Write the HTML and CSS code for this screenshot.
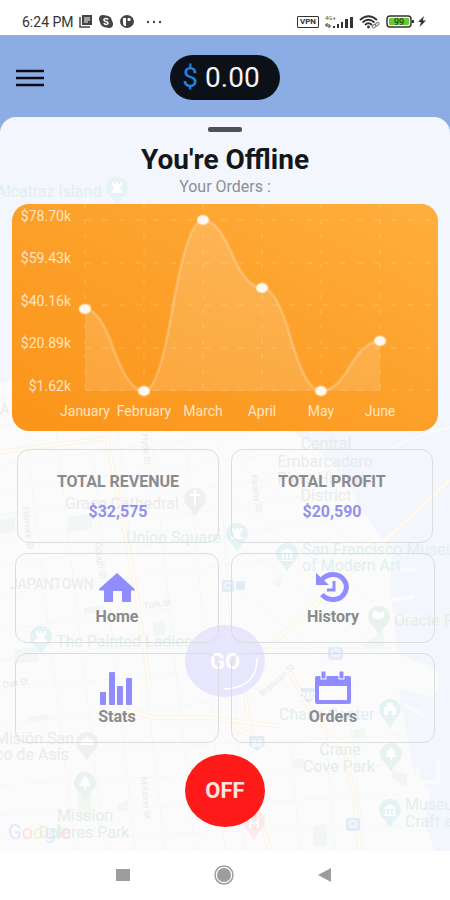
FILE: index.html
```html
<!DOCTYPE html>
<html lang="en">
<head>
<meta charset="utf-8">
<meta name="viewport" content="width=device-width, initial-scale=1">
<title>Driver dashboard</title>
<link rel="stylesheet" href="styles.css">
</head>
<body>
<div class="status-bar">
  <div class="status-group">
    <span class="clock">6:24 PM</span>
    <svg class="status-news" width="13" height="13" viewBox="0 0 13 13" aria-hidden="true"><path d="M3 0h10v10H3z" fill="#454545"/><path d="M1 2v10h10" fill="none" stroke="#454545" stroke-width="1.500"/><path d="M5 3h6M5 5h6M5 7h4" stroke="#fff"/></svg>
    <svg class="status-skype" width="14" height="13" viewBox="0 0 14 13" aria-hidden="true"><circle cx="4" cy="4" r="4" fill="#454545"/><circle cx="10" cy="9" r="4" fill="#454545"/><circle cx="7" cy="6.5" r="6" fill="#454545"/><path d="M9.2 4.4C8 3 4.900 3.200 4.900 4.900c0 2 4.300 1 4.300 3.100 0 1.700-3.300 1.900-4.500.3" fill="none" stroke="#fff" stroke-width="1.500"/></svg>
    <svg class="status-app" width="14" height="13" viewBox="0 0 14 13" aria-hidden="true"><ellipse cx="7" cy="6.500" rx="7" ry="6.500" fill="#454545"/><path d="M3 3h3v8H4.500Q3 10 3 8z" fill="#fff"/><rect x="7.500" y="3" width="3" height="3" rx="1" fill="#fff"/></svg>
    <svg width="16" height="4" viewBox="0 0 16 4" aria-hidden="true"><g fill="#454545"><circle cx="2" cy="2" r="1.200"/><circle cx="8" cy="2" r="1.200"/><circle cx="14" cy="2" r="1.200"/></g></svg>
  </div>
  <div class="status-group status-right">
    <span class="vpn">VPN</span>
    <svg width="28" height="14" viewBox="0 0 28 14" aria-hidden="true"><text x="0" y="5" class="network">4G+</text><g fill="#333"><rect x="8" y="11" width="2" height="2"/><rect x="12" y="9" width="2" height="4"/><rect x="16" y="7" width="2" height="6"/><rect x="20" y="4" width="3" height="9"/><rect x="25" y="2" width="3" height="11"/></g><path d="M2 8v4M4 9v4M0 10h2M4 11h2" stroke="#333"/></svg>
    <svg width="21" height="14" viewBox="0 0 21 14" aria-hidden="true"><g fill="none" stroke="#333" stroke-width="1.800"><path d="M1 5Q9.500-2.500 18 5M3.500 7.500Q9.500 2 15.500 7.500M6 10Q9.500 6.500 13 10"/></g><circle cx="9.500" cy="12" r="1.400" fill="#333"/><g fill="none" stroke="#777"><rect x="13" y="10" width="4" height="2.500" rx="1.200" transform="rotate(-40 15 11)"/><rect x="16" y="8" width="4" height="2.500" rx="1.200" transform="rotate(-40 18 9)"/></g></svg>
    <svg width="29" height="13" viewBox="0 0 29 13" aria-hidden="true"><rect x="1" y="1" width="24" height="11" rx="3" fill="#fff" stroke="#333" stroke-width="1.500"/><rect x="3" y="3" width="20" height="7" rx="1" fill="#66cc2e"/><rect x="26" y="5" width="2" height="3" fill="#333"/><text x="13" y="10" class="battery-level">99</text></svg>
    <svg class="bolt" width="8" height="11" viewBox="0 0 8 11" aria-hidden="true"><path d="M6 0 0 6h3L1.500 11 8 4.500H4.800z" fill="#333"/></svg>
  </div>
</div>

<div class="app">
  <header class="app-header">
    <button class="menu-button" type="button" aria-label="Menu">
      <svg width="28" height="18" viewBox="0 0 28 18"><path d="M0 2h28M0 9h28M0 16h28" stroke="#0b0d12" stroke-width="2.600"/></svg>
    </button>
    <div class="balance"><span class="currency">$</span> 0.00</div>
  </header>

  <main class="sheet">
    <svg class="map" viewBox="0 117 450 734" preserveAspectRatio="xMidYMid slice" aria-hidden="true">
      <path d="M0 383Q70 365 140 372Q230 380 290 430Q345 465 358 505Q380 535 392 555L390 590L396 640L400 700L408 740Q412 780 430 790L425 825L435 851H0Z" fill="#fbfbfb"/>
      <g stroke="#f6f7f8" fill="none">
        <path d="M0 400 220 375M0 425 260 400M0 465 260 430M0 490 330 447M0 515 340 470M0 540 350 490M0 565 370 515M0 595 380 545M0 630 180 607M0 660 180 640M0 690 180 672M0 725 230 700M0 755 400 735M0 785 400 765M0 815 400 795M0 840 400 825"/>
        <path d="M20 385 75 851M50 380 105 851M85 378 135 851M112 375 165 851M145 375 195 851M180 380 225 851M215 390 245 851M290 740 300 851M325 720 335 851M350 720 365 851M395 570 230 460M385 610 225 495M385 650 230 540M365 690 240 590"/>
      </g>
      <path d="M510 415Q420 430 389 450" stroke="#fbfbfb" stroke-width="2" fill="none"/>
      <path d="M390 600l24-3M388 615l30 4M396 570h21M405 705l20 12M418 767v14" stroke="#fbfbfb" stroke-width="4" fill="none"/>
      <path d="M398 655l35 22v18l-33-8zM438 760v22h-22" stroke="#fbfbfb" stroke-width="4" fill="none"/>
      <path d="M396 653l42 18v22l-40-6z" fill="#fbfbfb"/>
      <g fill="none" stroke="#fcf6ea" stroke-width="5">
        <path d="M0 452 107 438 135 585 150 686M450 480 375 550 260 655M125 710 155 718 210 718 280 726M290 672 310 710 345 752 355 800 360 851M245 690 250 735 230 725M250 785 270 851"/>
      </g>
      <g fill="none" stroke="#fefcf7" stroke-width="2">
        <path d="M0 452 107 438 135 585 150 686M450 480 375 550 260 655M125 710 155 718 210 718 280 726M290 672 310 710 345 752 355 800 360 851M245 690 250 735 230 725M250 785 270 851"/>
      </g>
      <g fill="#f3f7f4">
        <path d="M68 517l24-4v16l-24 3zM0 520l15-3v14l-15 3zM84 608l20-3v7l-20 3zM153 622l12-1v14l-12 2zM14 650l24-4v15l-24 3zM28 717l20-3v5l-20 3zM78 778h13v40H78zM118 804l10-4v10l-10 2zM293 760l11-2v10h-11zM313 826l14-2v22h-14zM362 645l22-15v16l-15 5zM392 770l15 4v13l-15-8zM353 730l12-2v10h-12zM272 582l8-6 3 8-6 4z"/>
      </g>

      <ellipse cx="225" cy="661" rx="40" ry="36" fill="#e7e6fd"/>
      <path d="M257 658q0 30-33 31" fill="none" stroke="#fff" stroke-width="1.500"/>
      <path d="M192 663q0-30 33-31 25 0 31 18" fill="none" stroke="#ecebfd"/>
      <text x="225" y="669" class="go">GO</text>

      <g fill="#e6f3f4">
        <path d="M117 205q-5-8-9-11a11 11 0 1 1 18 0q-4 3-9 11zM237 552q-5-9-9-12a11 11 0 1 1 18 0q-4 3-9 12zM287 572q-5-9-9-12a11 11 0 1 1 18 0q-4 3-9 12zM41 655q-5-9-9-12a11 11 0 1 1 18 0q-4 3-9 12zM390 728q-5-9-9-12a11 11 0 1 1 18 0q-4 3-9 12zM390 828q-5-9-9-12a11 11 0 1 1 18 0q-4 3-9 12z"/>
      </g>
      <g fill="#e9f3ed">
        <path d="M379 635q-5-9-9-12a11 11 0 1 1 18 0q-4 3-9 12zM85 801q-5-9-9-12a11 11 0 1 1 18 0q-4 3-9 12zM391 772q-5-9-9-12a11 11 0 1 1 18 0q-4 3-9 12z"/>
      </g>
      <g fill="#eff0f2">
        <path d="M195 517q-5-9-9-12a11 11 0 1 1 18 0q-4 3-9 12zM87 761q-5-9-9-12a11 11 0 1 1 18 0q-4 3-9 12z"/>
      </g>
      <path d="M254 840q-5-9-9-12a11 11 0 1 1 18 0q-4 3-9 12z" fill="#fce9ea"/>
      <g fill="#fff">
        <path id="rook" d="M112 182h2v2h2v-2h2v2h2v-2h2v4l-2 1 1 4h2v2h-12v-2h2l1-4-2-1z"/>
        <use href="#rook" x="120" y="346"/><use href="#rook" x="-76" y="449"/>
        <path d="M281 552l6-4 6 4v1h-12zM282 554h2v5h-2zM286 554h2v5h-2zM290 554h2v5h-2zM281 560h12v1h-12z"/>
        <path d="M384 808l6-4 6 4v1h-12zM385 810h2v5h-2zM389 810h2v5h-2zM393 810h2v5h-2zM384 815h12v1h-12z"/>
        <path d="M384 707h3v-4h6v4h3v8h-4v-4h-4v4h-4zM194 490h2v4h4v2h-4v9h-2v-9h-4v-2h4zM81 745v-4l2-2 2 2v-2l2-3 2 3v2l2-2 2 2v4z"/>
        <path id="tree" d="M85 776l5 6h-2l3 4h-5v3h-2v-3h-5l3-4h-2z"/>
        <use href="#tree" x="306" y="-29"/>
        <path d="M373 612q2-3 4 0 2 2 7-1v6q-6 4-12 0zM249 818h2v4h6v-4h2v10h-2v-4h-6v4h-2z"/>
      </g>
      <g fill="#e3ebf9">
        <rect x="328" y="647" width="15" height="13" rx="2"/><rect x="346" y="818" width="14" height="13" rx="2"/><rect x="222" y="580" width="12" height="12" rx="2"/><rect x="236" y="581" width="9" height="9" rx="2"/><path d="M301 688h15l1 9-9 6-7-6zM249 736h15l1 9-8 6-8-6z"/>
      </g>
      <g fill="none" stroke="#fff"><rect x="332" y="650" width="7" height="6" rx="1"/><rect x="350" y="821" width="6" height="6" rx="1"/><rect x="225" y="583" width="6" height="5" rx="1"/></g>

      <g class="place gray">
        <text x="65" y="509">Grace Cathedral</text><text x="10" y="589" class="district">JAPANTOWN</text>
        <text x="326" y="449" class="mid">Central</text><text x="325" y="467" class="mid">Embarcadero</text><text x="325" y="484" class="mid">Piers Historic</text><text x="326" y="501" class="mid">District</text>
        <text x="-5" y="744">Misión San</text><text x="-5" y="760">co de Asís</text><text x="0" y="414" class="district">A D</text>
      </g>
      <g class="place teal">
        <text x="-4" y="197">Alcatraz Island</text><text x="126" y="543">Union Square</text><text x="56" y="647">The Painted Ladies</text>
        <text x="302" y="555">San Francisco Museum</text><text x="302" y="571">of Modern Art</text><text x="279" y="720">Chase Center</text><text x="405" y="810">Museum of</text><text x="405" y="827">Craft and Design</text>
      </g>
      <g class="place green">
        <text x="394" y="626">Oracle Park</text><text x="340" y="755" class="mid">Crane</text><text x="339" y="772" class="mid">Cove Park</text><text x="85" y="821" class="mid">Mission</text><text x="84" y="838" class="mid">Dolores Park</text>
      </g>
      <g class="street">
        <text transform="translate(142 434) rotate(85)">Hyde St</text><text transform="translate(22 507) rotate(82)">Fillmore St</text><text transform="translate(95 543) rotate(82)">Gough St</text><text transform="translate(251 475) rotate(82)">Kearny St</text>
        <text transform="translate(144 609) rotate(-8)">Turk St</text><text transform="translate(3 688) rotate(-8)">Oak St</text><text transform="translate(263 697) rotate(-42)">Brannan St</text><text transform="translate(141 777) rotate(85)">Mission St</text>
      </g>
      <text x="308" y="699" class="road">280</text><text x="257" y="747" class="road">80</text>
      <text x="8" y="839" class="google"><tspan fill="#dfe8fc">G</tspan><tspan fill="#fbe0de">o</tspan><tspan fill="#fdf1d3">o</tspan><tspan fill="#dfe8fc">g</tspan><tspan fill="#e0f2e4">l</tspan><tspan fill="#fbe0de">e</tspan></text>
    </svg>

    <div class="content">
      <div class="handle"></div>
      <h1 class="title">You're Offline</h1>
      <p class="subtitle">Your Orders :</p>

      <svg class="chart" viewBox="0 0 426 227" role="img" aria-label="Orders from January to June">
        <defs>
          <linearGradient id="card-fill" x1="0" y1="1" x2="1" y2="0"><stop offset="0" stop-color="#fb941a"/><stop offset=".5" stop-color="#fca029"/><stop offset="1" stop-color="#ffaf3d"/></linearGradient>
          <linearGradient id="area-fill" x1="0" y1="0" x2="0" y2="1"><stop offset="0" stop-color="#fff" stop-opacity=".17"/><stop offset="1" stop-color="#fff" stop-opacity=".13"/></linearGradient>
        </defs>
        <rect width="426" height="227" rx="17" fill="url(#card-fill)"/>
        <path d="M73 16h353M73 59h353M73 101h353M73 144h353M73 186h353" class="grid-h"/>
        <path d="M73 0v187M132 0v187M191 0v187M250 0v187M309 0v187M368 0v187" class="grid-v"/>
        <path d="M73 105Q88 105 102 146Q117 187 132 187Q147 187 161 101Q176 16 191 16Q206 16 220 50Q235 84 250 84Q265 84 279 135Q294 187 309 187Q324 187 338 162Q353 137 368 137V187H73Z" fill="url(#area-fill)"/>
        <path d="M73 105Q88 105 102 146Q117 187 132 187Q147 187 161 101Q176 16 191 16Q206 16 220 50Q235 84 250 84Q265 84 279 135Q294 187 309 187Q324 187 338 162Q353 137 368 137" class="line"/>
        <g class="dots"><ellipse cx="73" cy="105" rx="6" ry="5"/><ellipse cx="132" cy="187" rx="6" ry="5"/><ellipse cx="191" cy="16" rx="6" ry="5"/><ellipse cx="250" cy="84" rx="6" ry="5"/><ellipse cx="309" cy="187" rx="6" ry="5"/><ellipse cx="368" cy="137" rx="6" ry="5"/></g>
        <g class="axis-y"><text x="59" y="17">$78.70k</text><text x="59" y="59">$59.43k</text><text x="59" y="102">$40.16k</text><text x="59" y="144">$20.89k</text><text x="59" y="187">$1.62k</text></g>
        <g class="axis-x"><text x="73" y="212">January</text><text x="132" y="212">February</text><text x="191" y="212">March</text><text x="250" y="212">April</text><text x="309" y="212">May</text><text x="368" y="212">June</text></g>
      </svg>

      <section class="totals">
        <div class="total"><h2 class="total-label">TOTAL REVENUE</h2><p class="total-value">$32,575</p></div>
        <div class="total"><h2 class="total-label">TOTAL PROFIT</h2><p class="total-value">$20,590</p></div>
      </section>

      <nav class="tiles">
        <a class="tile" href="#home"><svg width="36" height="34" viewBox="0 0 36 34" fill="#8f8dff" aria-hidden="true"><path d="M18 2 0 18q0 1.500 1 1.500h4V31h9V20h9v11h9V19.500h4q0-1-1-2z"/></svg>Home</a>
        <a class="tile" href="#history"><svg width="36" height="34" viewBox="0 0 36 34" aria-hidden="true"><path d="M7 8Q12 3.500 18 3.500A13.500 12.500 0 1 1 7 23.500" fill="none" stroke="#8f8dff" stroke-width="5"/><path d="M1 2v12h13z" fill="#8f8dff"/><path d="M19 10v9h-7" fill="none" stroke="#8f8dff" stroke-width="3"/></svg>History</a>
        <a class="tile" href="#stats"><svg width="36" height="34" viewBox="0 0 36 34" fill="#8f8dff" aria-hidden="true"><rect x="1" y="21" width="6" height="13" rx="1"/><rect x="10" y="1" width="6" height="33" rx="1"/><rect x="18" y="15" width="6" height="19" rx="1"/><rect x="27" y="7" width="6" height="27" rx="1"/></svg>Stats</a>
        <a class="tile" href="#orders"><svg width="36" height="34" viewBox="0 0 36 34" fill="#8f8dff" aria-hidden="true"><path fill-rule="evenodd" d="M2 5h32q2 0 2 2v24q0 2-2 2H2q-2 0-2-2V7q0-2 2-2zM4 15v14h28V15z"/><g stroke="#fcfcfc"><rect x="6" y="0" width="5" height="8"/><rect x="24" y="0" width="5" height="8"/></g></svg>Orders</a>
      </nav>

      <button class="off-button" type="button">OFF</button>
    </div>
  </main>
</div>

<div class="system-nav">
  <button type="button" aria-label="Recent apps"><svg width="20" height="20" viewBox="0 0 20 20"><rect x="3" y="4" width="14" height="12" fill="#9d9d9d"/></svg></button>
  <button type="button" aria-label="Home screen"><svg width="20" height="20" viewBox="0 0 20 20"><circle cx="10" cy="10" r="9" fill="none" stroke="#9d9d9d" stroke-width="1.500"/><circle cx="10" cy="10" r="7" fill="#9d9d9d"/></svg></button>
  <button type="button" aria-label="Back"><svg width="20" height="20" viewBox="0 0 20 20"><path d="M3 10 16 3v14z" fill="#9d9d9d"/></svg></button>
</div>
</body>
</html>
```
FILE: styles.css
```css
* {
  box-sizing: border-box;
}

body {
  margin: 0;
  min-height: 100vh;
  display: flex;
  flex-direction: column;
  background: #fff;
  font-family: Roboto, "Liberation Sans", sans-serif;
}

h1, h2, p {
  margin: 0;
}

svg {
  display: block;
}

button {
  border: 0;
  padding: 0;
  background: none;
  font: inherit;
  cursor: pointer;
}

/* Phone status bar */
.status-bar {
  display: flex;
  justify-content: space-between;
  padding: 8px 24px 0 22px;
  height: 35px;
  color: #333;
}

.status-group {
  display: flex;
  align-items: center;
  gap: 7px;
}

.status-right {
  gap: 6px;
}

.clock {
  font-size: 14px;
  line-height: 20px;
}

.status-news {
  margin-left: -2px;
}

.status-app {
  margin-right: 5px;
}

.vpn {
  border: 1px solid #333;
  border-radius: 1px;
  padding: 0 2px;
  font-size: 8px;
  line-height: 10px;
  font-weight: 700;
}

.network {
  font-size: 6px;
  fill: #555;
}

.battery-level {
  font-size: 9px;
  font-weight: 500;
  text-anchor: middle;
  fill: #224a10;
}

.bolt {
  margin-left: -3px;
}

/* Header */
.app {
  flex: 1;
  display: flex;
  flex-direction: column;
  background: #8cade4;
}

.app-header {
  display: grid;
  grid-template-columns: 1fr auto 1fr;
  align-items: center;
  padding: 20px 16px 17px;
}

.menu-button {
  justify-self: start;
}

.balance {
  padding: 0 20px 0 12px;
  border-radius: 23px;
  background: #0c1117;
  color: #f4f4f4;
  font-size: 28px;
  line-height: 45px;
}

.currency {
  color: #2383e2;
}

/* Sheet over the map */
.sheet {
  position: relative;
  flex: 1;
  overflow: hidden;
  border-radius: 16px 16px 0 0;
  background: #f3f6fc;
}

.map {
  position: absolute;
  inset: 0;
  width: 100%;
  height: 100%;
}

.place {
  font-size: 16px;
}

.gray {
  fill: #eaebec;
}

.teal {
  fill: #e1eff0;
}

.green {
  fill: #e4eee7;
}

.district {
  font-size: 14px;
}

.mid,
.go,
.road {
  text-anchor: middle;
}

.street {
  font-size: 9px;
  fill: #e9eaeb;
}

.road {
  font-size: 9px;
  font-weight: 700;
  fill: #fff;
}

.go {
  font-size: 22px;
  font-weight: 700;
  fill: #fff;
}

.google {
  font-size: 20px;
}

.content {
  position: relative;
  display: flex;
  flex-direction: column;
  padding: 10px 12px 24px;
}

.handle {
  align-self: center;
  width: 34px;
  height: 5px;
  border-radius: 2px;
  background: #4e5157;
}

.title {
  margin-top: 12px;
  text-align: center;
  font-size: 28px;
  line-height: 32px;
  font-weight: 700;
  color: #14161a;
}

.subtitle {
  text-align: center;
  font-size: 16px;
  line-height: 22px;
  color: #8d8f93;
}

/* Chart */
.chart {
  width: 100%;
  margin-top: 6px;
}

.grid-h,
.grid-v {
  fill: none;
  stroke: #fff;
  stroke-opacity: .23;
}

.grid-h {
  stroke-dasharray: 6 11;
}

.grid-v {
  stroke-dasharray: 5 10;
}

.line {
  fill: none;
  stroke: #fff;
  stroke-opacity: .22;
  stroke-width: 3;
}

.dots {
  fill: #fff8ee;
  stroke: #ffc98a;
  stroke-opacity: .4;
  stroke-width: 2;
}

.axis-y,
.axis-x {
  font-size: 14px;
  fill: #ffe4c2;
}

.axis-y {
  text-anchor: end;
}

.axis-x {
  text-anchor: middle;
}

/* Totals */
.totals,
.tiles {
  display: grid;
  grid-template-columns: 1fr 1fr;
  column-gap: 12px;
}

.totals {
  margin: 18px 5px 0;
}

.total,
.tile {
  border: 1px solid #dcdddd;
  border-radius: 12px;
  text-align: center;
}

.total {
  padding: 17px 0 15px;
}

.total-label,
.total-value {
  font-size: 16px;
  line-height: 30px;
  font-weight: 700;
}

.total-label {
  color: #8a8b8c;
}

.total-value {
  color: #9391ea;
}

/* Navigation tiles */
.tiles {
  margin: 10px 3px 0;
  row-gap: 10px;
}

.tile {
  display: flex;
  flex-direction: column;
  align-items: center;
  padding: 17px 0 13px;
  font-size: 16px;
  line-height: 24px;
  font-weight: 700;
  color: #8a8b8c;
  text-decoration: none;
}

.off-button {
  align-self: center;
  margin-top: 11px;
  width: 80px;
  height: 73px;
  border-radius: 50%;
  background: #ff1a1a;
  color: #ffe3e3;
  font-size: 22px;
  font-weight: 700;
}

/* Phone navigation bar */
.system-nav {
  display: flex;
  justify-content: center;
  align-items: center;
  gap: 81px;
  height: 49px;
  padding: 0 3px 2px 0;
}
```
